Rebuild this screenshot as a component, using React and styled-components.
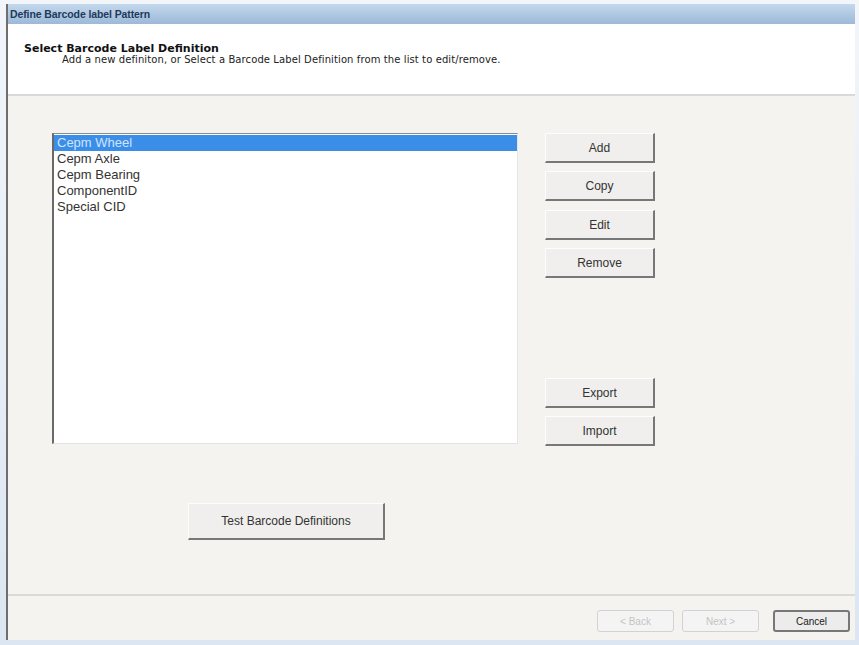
import styled, { createGlobalStyle } from 'styled-components';

const GlobalStyle = createGlobalStyle`
  html, body {
    margin: 0;
    padding: 0;
    background: #e3ecf5;
  }
  body {
    font-family: "Liberation Sans", Arial, sans-serif;
  }
`;

const Frame = styled.div`
  width: 859px;
  height: 645px;
  box-sizing: border-box;
  padding: 4px 4px 5px 6px;
  background: linear-gradient(#f2f6fa, #dbe6f2);
  display: flex;
`;

const Window = styled.div`
  flex: 1;
  display: flex;
  flex-direction: column;
  border-left: 2px solid #6e6e6e;
  background: #f5f3f0;
`;

const TitleBar = styled.div`
  height: 20px;
  display: flex;
  align-items: center;
  padding-left: 2px;
  background: linear-gradient(#c4d8ec, #9cb9d8);
  color: #1f3a5c;
  font-size: 10.5px;
  font-weight: bold;
  letter-spacing: -0.1px;
`;

const Header = styled.div`
  height: 72px;
  box-sizing: border-box;
  padding: 19px 0 0 16px;
  background: #fff;
  border-bottom: 2px solid #d9d9d9;
  font-family: "DejaVu Sans", Verdana, sans-serif;
`;

const HeaderTitle = styled.div`
  font-size: 11px;
  line-height: 11px;
  font-weight: bold;
  color: #111;
`;

const HeaderText = styled.div`
  margin-left: 38px;
  font-size: 10px;
  line-height: 12px;
  letter-spacing: 0.1px;
  color: #222;
`;

const Body = styled.div`
  flex: 1;
  display: flex;
  flex-direction: column;
  padding: 37px 0 0 44px;
`;

const Row = styled.div`
  display: flex;
  gap: 27px;
`;

const ListBox = styled.div`
  width: 466px;
  height: 311px;
  box-sizing: border-box;
  background: #fff;
  border-left: 2px solid #6a6a6a;
  border-top: 1px solid #8a8a8a;
  border-right: 1px solid #e4e4e4;
  border-bottom: 1px solid #e4e4e4;
  padding-top: 1px;
`;

const ListItem = styled.div`
  height: 16px;
  line-height: 16px;
  padding-left: 3px;
  font-size: 13px;
  color: ${p => (p.$selected ? '#cfe4ff' : '#333')};
  background: ${p => (p.$selected ? '#3b8ee8' : 'transparent')};
`;

const ButtonColumn = styled.div`
  display: flex;
  flex-direction: column;
  width: 110px;
`;

const Button = styled.div`
  height: 30px;
  box-sizing: border-box;
  display: flex;
  align-items: center;
  justify-content: center;
  margin-top: ${p => p.$gap || 0}px;
  background: #f0efed;
  border-right: 2px solid #777;
  border-bottom: 2px solid #777;
  border-top: 1px solid #fdfdfd;
  border-left: 1px solid #fdfdfd;
  font-size: 12px;
  color: #333;
`;

const TestButton = styled(Button)`
  width: 197px;
  height: 37px;
  margin: 57px 0 0 136px;
`;

const Footer = styled.div`
  height: 46px;
  box-sizing: border-box;
  border-top: 2px solid #dcdad6;
  display: flex;
  justify-content: flex-end;
  align-items: flex-start;
  gap: 8px;
  padding: 14px 5px 0 0;
`;

const NavButton = styled.div`
  width: 77px;
  height: 22px;
  box-sizing: border-box;
  display: flex;
  align-items: center;
  justify-content: center;
  border-radius: 3px;
  font-size: 10px;
  background: ${p => (p.$disabled ? '#f4f4f4' : '#ececec')};
  border: ${p => (p.$disabled ? '1px solid #d2d2d2' : '2px solid #777')};
  color: ${p => (p.$disabled ? '#c4c4c4' : '#222')};
  margin-left: ${p => p.$gap || 0}px;
`;

const items = ['Cepm Wheel', 'Cepm Axle', 'Cepm Bearing', 'ComponentID', 'Special CID'];

export default function App() {
  return (
    <>
      <GlobalStyle />
      <Frame>
        <Window>
          <TitleBar>Define Barcode label Pattern</TitleBar>
          <Header>
            <HeaderTitle>Select Barcode Label Definition</HeaderTitle>
            <HeaderText>
              Add a new definiton, or Select a Barcode Label Definition from the list to edit/remove.
            </HeaderText>
          </Header>
          <Body>
            <Row>
              <ListBox>
                {items.map((name, i) => (
                  <ListItem key={name} $selected={i === 0}>{name}</ListItem>
                ))}
              </ListBox>
              <ButtonColumn>
                <Button>Add</Button>
                <Button $gap={8}>Copy</Button>
                <Button $gap={9}>Edit</Button>
                <Button $gap={8}>Remove</Button>
                <Button $gap={100}>Export</Button>
                <Button $gap={8}>Import</Button>
              </ButtonColumn>
            </Row>
            <TestButton>Test Barcode Definitions</TestButton>
          </Body>
          <Footer>
            <NavButton $disabled>&lt; Back</NavButton>
            <NavButton $disabled>Next &gt;</NavButton>
            <NavButton $gap={6}>Cancel</NavButton>
          </Footer>
        </Window>
      </Frame>
    </>
  );
}
